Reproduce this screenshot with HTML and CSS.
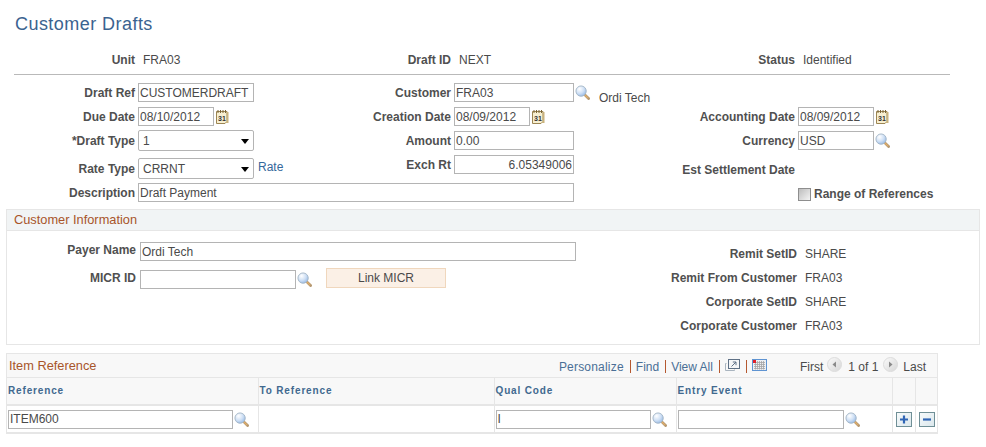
FILE: index.html
```html
<!DOCTYPE html>
<html lang="en">
<head>
<meta charset="utf-8">
<title>Customer Drafts</title>
<link rel="stylesheet" href="styles.css">
</head>
<body>
<svg class="defs" width="0" height="0" aria-hidden="true">
  <defs>
    <radialGradient id="glass" cx="35%" cy="30%" r="85%">
      <stop offset="0" stop-color="#ffffff"/>
      <stop offset="0.5" stop-color="#cfe0f5"/>
      <stop offset="1" stop-color="#86aee0"/>
    </radialGradient>
    <linearGradient id="orb" x1="0" y1="0" x2="1" y2="1">
      <stop offset="0" stop-color="#fbfbfb"/>
      <stop offset="1" stop-color="#d6d6d6"/>
    </linearGradient>
    <symbol id="lookup" viewBox="0 0 16 16">
      <line x1="10" y1="10" x2="14.5" y2="14.5" stroke="#b79a73" stroke-width="3" stroke-linecap="round"/>
      <line x1="10.500" y1="10.500" x2="14" y2="14" stroke="#e3ae66" stroke-width="1.200"/>
      <circle cx="6.500" cy="6.500" r="5.500" fill="url(#glass)" stroke="#a3b5c6"/>
    </symbol>
    <symbol id="cal" viewBox="0 0 13 15">
      <path d="M.5 2.500h10.500v10l-2 2h-8.500z" fill="#f7efd0" stroke="#9c8553"/>
      <path d="M11 3h1.500v11h-3l1.500-1.500z" fill="#c9b27c"/>
      <path d="M2 1v3M4.500 1v3M7 1v3M9.500 1v3" stroke="#7a6536"/>
      <text x="2" y="11.500" class="cal-num">31</text>
    </symbol>
    <symbol id="orb-left" viewBox="0 0 15 15">
      <circle cx="7.500" cy="7.500" r="7" fill="url(#orb)" stroke="#dcdcdc"/>
      <path d="M9 4.500v6L5.500 7.500z" fill="#8a8a8a"/>
    </symbol>
    <symbol id="orb-right" viewBox="0 0 15 15">
      <circle cx="7.500" cy="7.500" r="7" fill="url(#orb)" stroke="#dcdcdc"/>
      <path d="M6 4.500v6l3.500-3z" fill="#8a8a8a"/>
    </symbol>
  </defs>
</svg>

<h1 class="title">Customer Drafts</h1>

<div class="info">
  <div class="pair pair-a"><span class="label">Unit</span><span class="val">FRA03</span></div>
  <div class="pair pair-b"><span class="label">Draft ID</span><span class="val">NEXT</span></div>
  <div class="pair"><span class="label">Status</span><span class="val">Identified</span></div>
</div>
<div class="rule"></div>

<div class="form">
  <div class="main">
    <div class="cols">
      <div class="col col-left">
        <div class="row"><span class="label">Draft Ref</span><input class="w116" value="CUSTOMERDRAFT"></div>
        <div class="row"><span class="label">Due Date</span><input class="w76" value="08/10/2012"><svg class="ico-cal"><use href="#cal"/></svg></div>
        <div class="row row-sel-a"><span class="label">*Draft Type</span><span class="sel"><select><option>1</option></select></span></div>
        <div class="row row-sel-b"><span class="label">Rate Type</span><span class="sel"><select><option>CRRNT</option></select></span><a class="link rate">Rate</a></div>
      </div>
      <div class="col col-mid">
        <div class="row"><span class="label">Customer</span><input class="w120" value="FRA03"><svg class="ico-look"><use href="#lookup"/></svg><span class="val cust">Ordi Tech</span></div>
        <div class="row"><span class="label">Creation Date</span><input class="w76" value="08/09/2012"><svg class="ico-cal"><use href="#cal"/></svg></div>
        <div class="row"><span class="label">Amount</span><input class="w120" value="0.00"></div>
        <div class="row"><span class="label">Exch Rt</span><input class="w120 num" value="6.05349006"></div>
      </div>
    </div>
    <div class="row row-desc"><span class="label">Description</span><input class="w436" value="Draft Payment"></div>
  </div>
  <div class="col col-right">
    <div class="row row-blank"></div>
    <div class="row"><span class="label">Accounting Date</span><input class="w76" value="08/09/2012"><svg class="ico-cal"><use href="#cal"/></svg></div>
    <div class="row"><span class="label">Currency</span><input class="w76" value="USD"><svg class="ico-look"><use href="#lookup"/></svg></div>
    <div class="row row-est"><span class="label">Est Settlement Date</span></div>
    <div class="row row-range"><span class="label"></span><span class="check"></span><span class="label range">Range of References</span></div>
  </div>
</div>

<section class="box">
  <h2 class="box-head">Customer Information</h2>
  <div class="box-body">
    <div class="payer">
      <div class="row"><span class="label up">Payer Name</span><input class="w436" value="Ordi Tech"></div>
      <div class="row"><span class="label up">MICR ID</span><input class="w156" value=""><svg class="ico-look"><use href="#lookup"/></svg><button class="action" type="button">Link MICR</button></div>
    </div>
    <dl class="remit">
      <div class="r"><dt class="label">Remit SetID</dt><dd class="val">SHARE</dd></div>
      <div class="r"><dt class="label">Remit From Customer</dt><dd class="val">FRA03</dd></div>
      <div class="r"><dt class="label">Corporate SetID</dt><dd class="val">SHARE</dd></div>
      <div class="r"><dt class="label">Corporate Customer</dt><dd class="val">FRA03</dd></div>
    </dl>
  </div>
</section>

<section class="grid">
  <div class="bar">
    <h2 class="bar-title">Item Reference</h2>
    <nav class="nav">
      <a class="link wide">Personalize</a><i class="sep"></i>
      <a class="link">Find</a><i class="sep"></i>
      <a class="link">View All</a><i class="sep"></i>
      <svg class="ico-new" viewBox="0 0 15 12"><path d="M1.500 4.500h-1v7h9v-1" fill="none" stroke="#a9b4bf"/><rect x="3.500" y=".5" width="11" height="9" fill="#f4f6f8" stroke="#5f7186"/><path d="M6.500 7.500l4.500-4.500M7.800 3h3.200v3.200" fill="none" stroke="#5f7186"/></svg><i class="sep"></i>
      <svg class="ico-sheet" viewBox="0 0 15 12"><rect x=".5" y=".5" width="14" height="11" fill="#eef0f3" stroke="#5f94d2"/><path d="M2 3.500h11M2 5.500h11M2 7.500h11M2 9.500h11M3.500 2v8.500M5.500 2v8.500M7.500 2v8.500M9.500 2v8.500M11.500 2v8.500" stroke="#a5a5a5" stroke-width=".8"/><rect x="1" y="1" width="3" height="3" fill="#e0202a"/></svg>
      <span class="pager first">First</span>
      <svg class="ico-orb"><use href="#orb-left"/></svg>
      <span class="pager count">1 of 1</span>
      <svg class="ico-orb"><use href="#orb-right"/></svg>
      <span class="pager last">Last</span>
    </nav>
  </div>
  <table class="tbl">
    <colgroup><col class="c1"><col class="c2"><col class="c3"><col class="c4"><col class="c5"><col class="c6"></colgroup>
    <thead>
      <tr><th>Reference</th><th>To Reference</th><th>Qual Code</th><th>Entry Event</th><th></th><th></th></tr>
    </thead>
    <tbody>
      <tr>
        <td><div class="cell"><input class="w225" value="ITEM600"><svg class="ico-look"><use href="#lookup"/></svg></div></td>
        <td></td>
        <td><div class="cell"><input class="w155" value="I"><svg class="ico-look"><use href="#lookup"/></svg></div></td>
        <td><div class="cell"><input class="w166" value=""><svg class="ico-look"><use href="#lookup"/></svg></div></td>
        <td><div class="cell cell-btn"><span class="sq"><svg viewBox="0 0 14 13"><path d="M7 2.500v8M3 6.500h8" stroke="#2f65b5" stroke-width="2.200"/></svg></span></div></td>
        <td><div class="cell cell-btn"><span class="sq"><svg viewBox="0 0 14 13"><path d="M3 6.500h8" stroke="#2f65b5" stroke-width="2.200"/></svg></span></div></td>
      </tr>
    </tbody>
  </table>
</section>
</body>
</html>
```

FILE: styles.css
```css
* { box-sizing: border-box; }
html, body { margin: 0; padding: 0; }
body {
  width: 986px;
  height: 447px;
  overflow: hidden;
  background: #fff;
  font-family: "Liberation Sans", Arial, sans-serif;
  font-size: 12px;
  color: #4a4a4a;
}
.defs { display: block; height: 0; }
.cal-num { font: bold 7px "Liberation Sans", Arial, sans-serif; fill: #333; }

.title {
  margin: 14px 0 0 15px;
  font-size: 18px;
  line-height: 20px;
  font-weight: normal;
  color: #3b6390;
  letter-spacing: .45px;
}

.label { font-weight: bold; color: #505050; text-align: right; flex: none; }
.val { color: #4a4a4a; }
.link { color: #35689b; }

.info { display: flex; margin: 19px 0 0 14px; height: 14px; line-height: 14px; }
.pair { display: flex; gap: 8px; }
.pair .label { width: 121px; }
.pair-a { width: 316px; }
.pair-b { width: 344px; }
.rule { margin: 7px 36px 8px 14px; height: 1px; background: #b9b9b9; }

.form { display: flex; align-items: flex-start; padding-left: 14px; }
.main { width: 646px; flex: none; }
.cols { display: flex; }
.col { display: flex; flex-direction: column; }
.col-left { width: 316px; flex: none; }
.row { display: flex; align-items: center; height: 19px; gap: 3px; margin-bottom: 5px; flex: none; }
.col-left .label, .row-desc .label { width: 121px; }
.col-mid .label { width: 121px; }
.col-mid { flex: none; }
.row-sel-a { height: 21px; margin-top: -1px; margin-bottom: 7px; }
.row-sel-b { height: 21px; margin-bottom: 4px; }
.row-desc { margin-bottom: 0; }
.col-right { flex: none; }
.col-right .row .label:first-child { width: 135px; }
.row-blank { margin-bottom: 5px; }
.row-est { height: 14px; margin-top: 8px; margin-bottom: 0; }
.row-range { margin-top: 10px; height: 14px; margin-bottom: 0; gap: 3px; }
.range { width: auto; }

input {
  display: block;
  height: 19px;
  padding: 0 1px;
  border: 1px solid #b4b4b4;
  border-radius: 0;
  background: #fff;
  outline: 0;
  margin: 0;
  font: 12px "Liberation Sans", Arial, sans-serif;
  color: #4a4a4a;
  flex: none;
}
.w76 { width: 76px; }
.w116 { width: 116px; }
.w120 { width: 120px; }
.w155 { width: 155px; }
.w156 { width: 156px; }
.w166 { width: 166px; }
.w225 { width: 225px; }
.w436 { width: 436px; }
.num { text-align: right; }

.ico-cal { width: 13px; height: 15px; flex: none; margin: -1px 0 0 -1px; }
.ico-look { width: 15px; height: 15px; flex: none; margin-left: -2px; }
.cust { margin-left: 6px; margin-top: 10px; white-space: nowrap; }

.sel { position: relative; display: block; width: 116px; height: 21px; flex: none; }
.sel select {
  appearance: none;
  -webkit-appearance: none;
  display: block;
  width: 100%;
  height: 100%;
  padding: 0 0 0 4px;
  margin: 0;
  border: 1px solid #b4b4b4;
  border-radius: 2px;
  background: #fff;
  font: 12px "Liberation Sans", Arial, sans-serif;
  color: #4a4a4a;
}
.sel::after {
  content: "";
  position: absolute;
  left: 103px;
  top: 9px;
  border-style: solid;
  border-width: 5px 4.500px 0;
  border-color: #000 transparent transparent;
}
.rate { margin-left: 1px; margin-top: -3px; }

.check {
  display: block;
  width: 13px;
  height: 13px;
  flex: none;
  border: 1px solid #8e8e8e;
  background: linear-gradient(135deg, #bdbdbd, #f4f4f4);
}

.box {
  width: 974px;
  height: 136px;
  margin: 7px 0 0 6px;
  border: 1px solid #e6e6e6;
}
.box-head {
  margin: 0;
  height: 21px;
  padding-left: 7px;
  font-size: 12.800px;
  line-height: 19px;
  font-weight: normal;
  color: #a8552a;
  background: #f1f4f5;
  border-bottom: 1px solid #e6e6e6;
}
.box-body { display: flex; }
.payer { width: 646px; flex: none; padding: 11px 0 0 9px; }
.payer .row { margin-bottom: 9px; gap: 4px; }
.payer .label { width: 120px; }
.up { margin-top: -4px; }
.payer .ico-look { margin-left: -3px; }
.action {
  width: 120px;
  height: 20px;
  margin: -3px 0 0 10px;
  padding: 0;
  background: #fbf0e6;
  border: 1px solid #f0d7bd;
  border-radius: 0;
  font: 12px "Liberation Sans", Arial, sans-serif;
  color: #4a4a4a;
}
.remit { margin: 11px 0 0; }
.r { display: flex; gap: 8px; height: 24px; align-items: center; }
.r .label { width: 144px; }
.r dd { margin: 0; }

.grid {
  width: 932px;
  margin: 8px 0 0 6px;
  border: 1px solid #e6e6e6;
  border-bottom-width: 2px;
}
.bar {
  display: flex;
  align-items: center;
  height: 24px;
  background: #f8f8f8;
  border-bottom: 1px solid #e6e6e6;
}
.bar-title {
  margin: 0 0 0 2px;
  font-size: 12.800px;
  font-weight: normal;
  color: #a8552a;
}
.nav { display: flex; align-items: center; margin-left: auto; padding: 2px 11px 0 0; }
.nav a { color: #4a6f96; white-space: nowrap; }
.nav .wide { letter-spacing: .2px; }
.pager { color: #4a4a4a; white-space: nowrap; }
.sep { display: block; width: 1px; height: 13px; margin: 0 5px 0 6px; background: #b5582f; }
.ico-new, .ico-sheet { display: block; width: 15px; height: 12px; margin-top: -4px; flex: none; }
.ico-orb { display: block; width: 15px; height: 15px; flex: none; margin-top: -5px; }
.first { margin-left: 33px; margin-right: 4px; }
.count { margin: 0 5px 0 6px; }
.last { margin-left: 5px; }

.tbl { width: 930px; table-layout: fixed; border-collapse: collapse; }
.c1 { width: 251px; }
.c2 { width: 236px; }
.c3 { width: 182px; }
.c4 { width: 216px; }
.c5 { width: 23px; }
.c6 { width: 22px; }
.tbl th {
  height: 27px;
  padding: 0 0 2px 1px;
  background: #f8f8f8;
  border-right: 1px solid #e6e6e6;
  border-bottom: 2px solid #e6e6e6;
  text-align: left;
  font-size: 10px;
  letter-spacing: .85px;
  color: #41698f;
}
.tbl td { height: 27px; padding: 0 0 0 1px; border-right: 1px solid #e6e6e6; }
.tbl th:last-child, .tbl td:last-child { border-right: 0; }
.cell { display: flex; align-items: center; }
.cell .ico-look { margin-left: 1px; }
.cell-btn { padding-left: 2px; }
.sq {
  display: block;
  width: 16px;
  height: 15px;
  border: 1px solid #6f8f96;
  background: linear-gradient(135deg, #f6fafb, #dbe7ec);
}
.sq svg { display: block; width: 14px; height: 13px; }
```
